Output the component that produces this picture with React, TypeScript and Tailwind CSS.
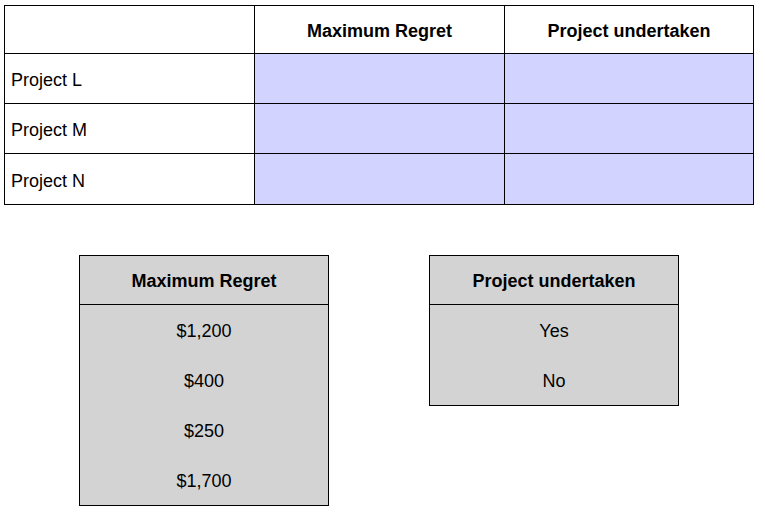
const rows = ['Project L', 'Project M', 'Project N'];
const regrets = ['$1,200', '$400', '$250', '$1,700'];
const taken = ['Yes', 'No'];

function Box({ title, items }: { title: string; items: string[] }) {
  return (
    <div className="w-[250px] border border-black bg-[#d3d3d3]">
      <div className="h-[49px] pt-[2px] border-b border-black flex items-center justify-center font-bold">
        {title}
      </div>
      {items.map((item) => (
        <div key={item} className="h-[50px] pt-[2px] flex items-center justify-center">
          {item}
        </div>
      ))}
    </div>
  );
}

export default function App() {
  return (
    <div className="w-[765px] h-[519px] bg-white text-black text-[18px] font-['Liberation_Sans',Arial,sans-serif] pt-[5px] pl-[4px]">
      {/* Top table */}
      <div className="w-[750px] border border-black grid grid-cols-[250px_250px_248px]">
        <div className="h-[48px] border-r border-b border-black" />
        <div className="h-[48px] pt-[3px] border-r border-b border-black flex items-center justify-center font-bold">
          Maximum Regret
        </div>
        <div className="h-[48px] pt-[3px] border-b border-black flex items-center justify-center font-bold">
          Project undertaken
        </div>
        {rows.map((r, i) => (
          <div key={r} className="contents">
            <div
              className={
                'h-[50px] pt-[4px] border-r border-black flex items-center pl-[6px] ' +
                (i < rows.length - 1 ? 'border-b' : '')
              }
            >
              {r}
            </div>
            <div
              className={
                'h-[50px] border-r border-black bg-[#d3d3ff] ' + (i < rows.length - 1 ? 'border-b' : '')
              }
            />
            <div className={'h-[50px] border-black bg-[#d3d3ff] ' + (i < rows.length - 1 ? 'border-b' : '')} />
          </div>
        ))}
      </div>

      {/* Answer boxes */}
      <div className="flex items-start gap-[100px] mt-[50px] ml-[75px]">
        <Box title="Maximum Regret" items={regrets} />
        <Box title="Project undertaken" items={taken} />
      </div>
    </div>
  );
}
